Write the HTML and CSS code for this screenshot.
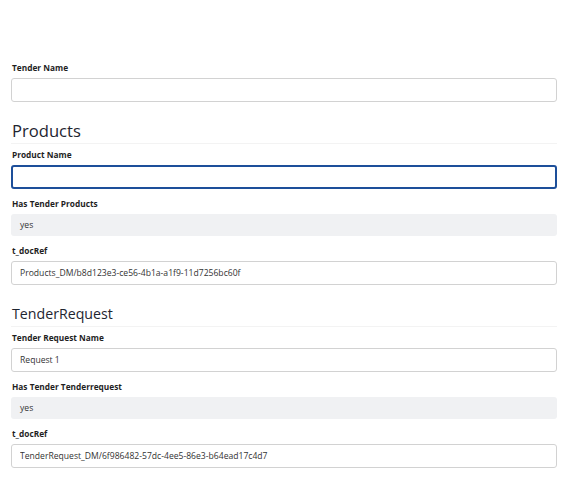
FILE: index.html
```html
<!DOCTYPE html>
<html lang="en">
<head>
	<meta charset="UTF-8">
	<meta name="viewport" content="width=device-width, initial-scale=1.0">
	<title>Tender</title>

	<link rel="stylesheet" href="styles.css">

</head>
<body>

	<form class="tender-form">

		<div class="form-field">
			<label for="tender_name">Tender Name</label>
			<input type="text" id="tender_name" name="tender_name" value="" />
		</div>

		<h2 class="form-section">Products</h2>

		<div class="form-field">
			<label for="product_name">Product Name</label>
			<input type="text" id="product_name" name="product_name" value="" class="is-focused" />
		</div>

		<div class="form-field">
			<label>Has Tender Products</label>
			<div class="form-static">yes</div>
		</div>

		<div class="form-field">
			<label for="products_docref">t_docRef</label>
			<input type="text" id="products_docref" name="products_docref" value="Products_DM/b8d123e3-ce56-4b1a-a1f9-11d7256bc60f" />
		</div>

		<h2 class="form-section form-section-sub">TenderRequest</h2>

		<div class="form-field">
			<label for="request_name">Tender Request Name</label>
			<input type="text" id="request_name" name="request_name" value="Request 1" />
		</div>

		<div class="form-field">
			<label>Has Tender Tenderrequest</label>
			<div class="form-static">yes</div>
		</div>

		<div class="form-field">
			<label for="request_docref">t_docRef</label>
			<input type="text" id="request_docref" name="request_docref" value="TenderRequest_DM/6f986482-57dc-4ee5-86e3-b64ead17c4d7" />
		</div>

	</form>

</body>
</html>
```

FILE: styles.css
```css
body {
	margin: 0;
	background-color: #ffffff;
	font-family: "Open Sans", "Noto Sans", sans-serif;
	color: #222;
}

.tender-form {
	width: 546px;
	padding: 62px 0 0 11px;
}

.form-field {
	display: flex;
	flex-direction: column;
	margin-bottom: 9px;
}
.form-field > label {
	display: block;
	margin: 0 0 4px 1px;
	font-size: 8.3px;
	line-height: 12px;
	font-weight: 700;
	color: #1f1f1f;
}
.form-field > input {
	box-sizing: border-box;
	height: 24px;
	margin: 0;
	padding: 0 8px;
	font-family: inherit;
	font-size: 8.6px;
	color: #333;
	background-color: #fff;
	border: 1px solid #d2d2d2;
	border-radius: 3px;
	outline: none;
}
.form-field > input.is-focused {
	border: 2px solid #1d4f9a;
	padding: 0 7px;
}

.form-static {
	box-sizing: border-box;
	height: 22px;
	padding: 0 9px;
	font-size: 8.6px;
	line-height: 22px;
	color: #333;
	background-color: #f0f1f3;
	border-radius: 3px;
}

/* margin-top collapses with the field's 9px bottom margin */
.form-section {
	margin: 19px 0 5px 0;
	padding: 0 0 2px 1px;
	font-size: 16.6px;
	line-height: 20px;
	font-weight: 400;
	color: #1e2530;
	border-bottom: 1px solid #f3f3f3;
}
.form-section-sub {
	font-size: 14.2px;
}
```
